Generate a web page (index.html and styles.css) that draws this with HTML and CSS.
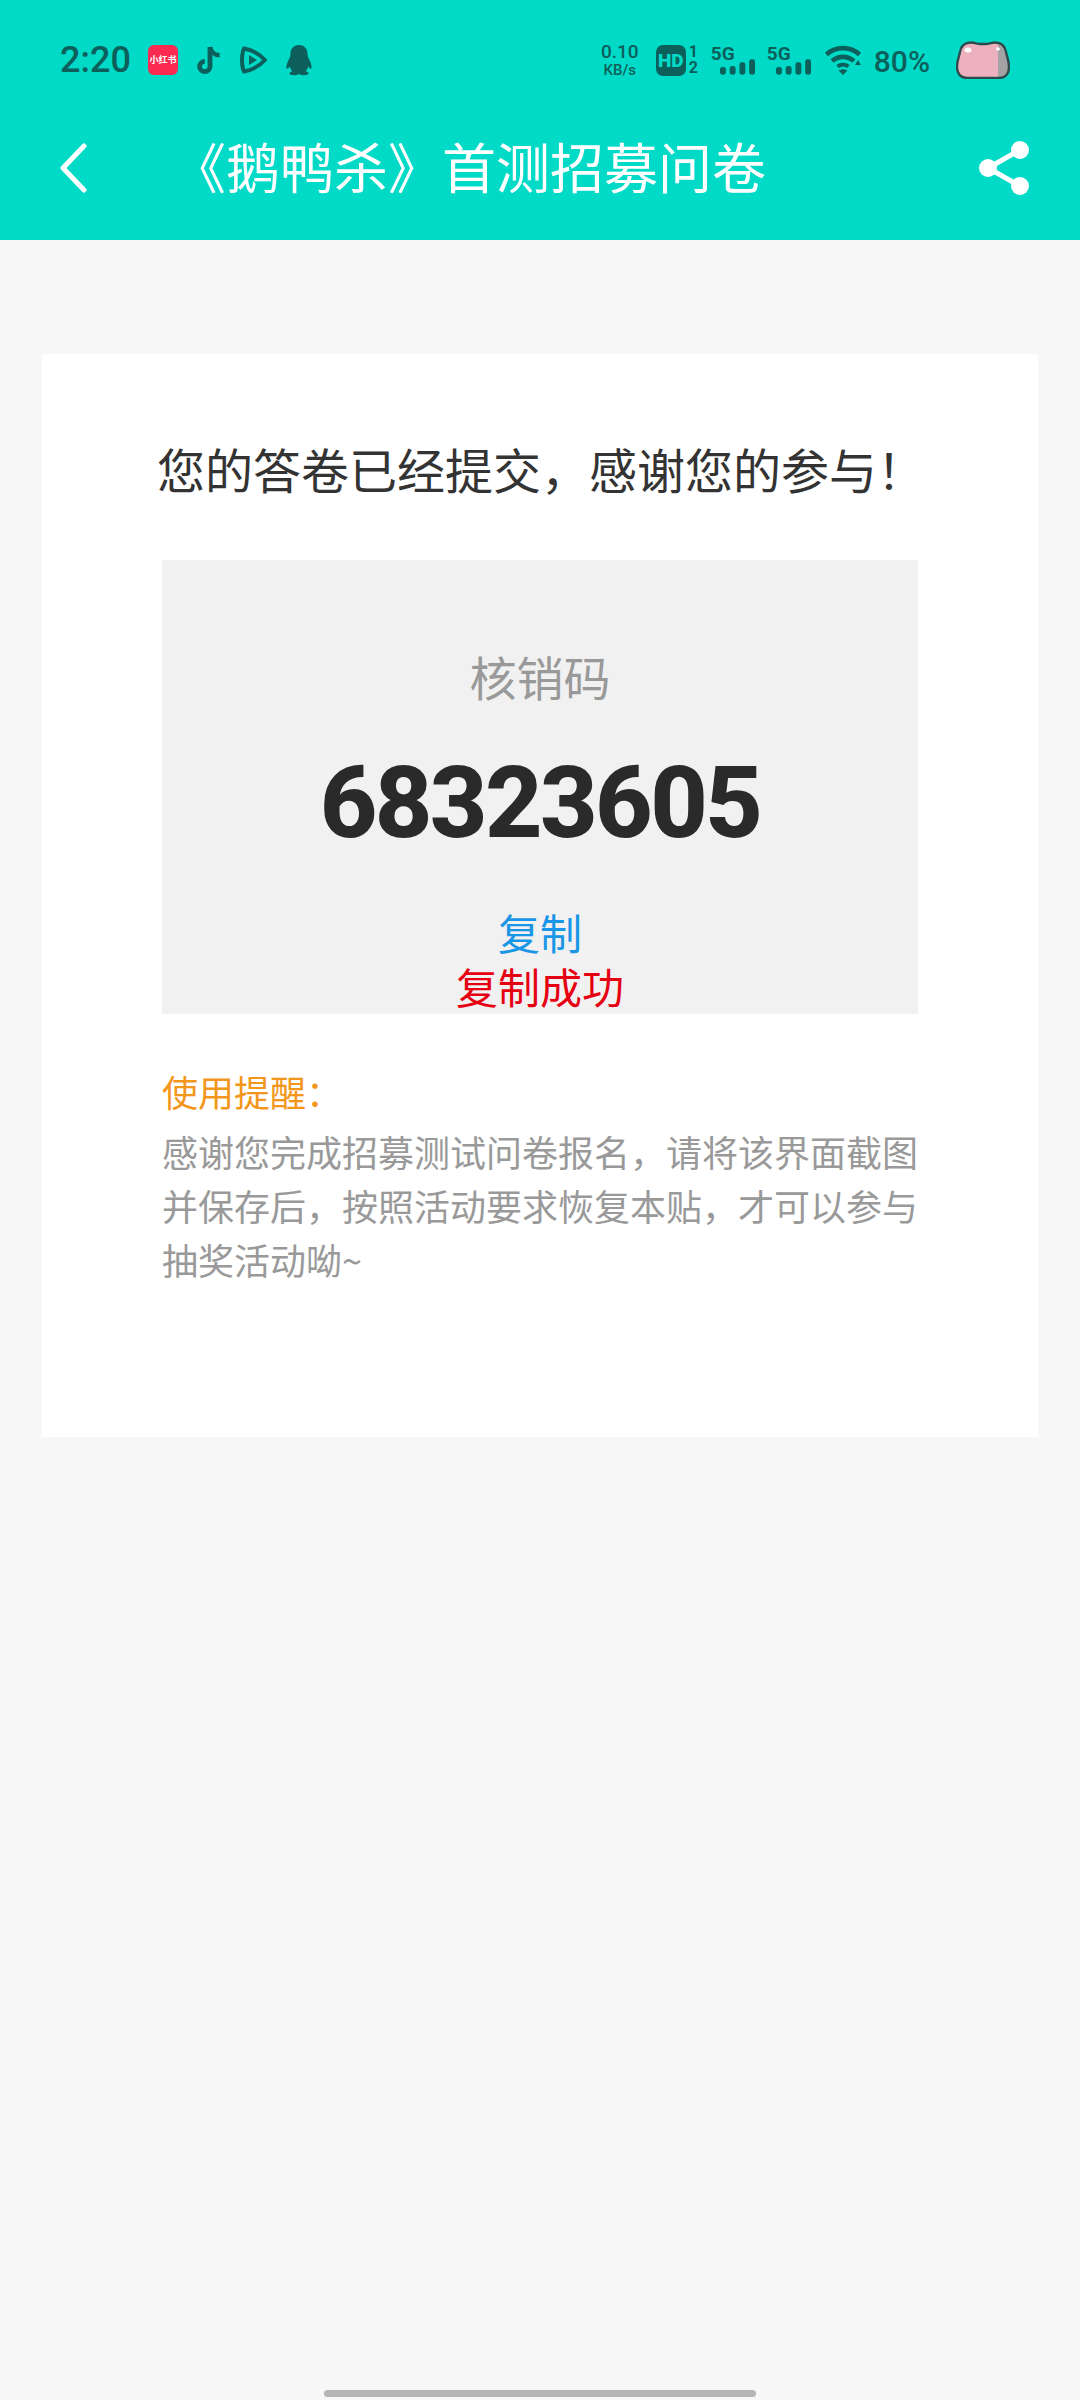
FILE: index.html
```html
<!DOCTYPE html>
<html lang="zh-CN">
<head>
<meta charset="utf-8">
<title>《鹅鸭杀》首测招募问卷</title>
<link rel="stylesheet" href="styles.css">
</head>
<body>
<header class="top">
  <div class="status">
    <span class="time">2:20</span>
    <span class="xhs">小红书</span>
    <svg class="ic ic-tt" viewBox="0 0 26 30"><path d="M14 2v19.500a5.200 5.200 0 1 1-5.200-5.200" fill="none" stroke="#0c5f5b" stroke-width="4.800"/><path d="M14 2c.6 4.600 4.400 8 9.600 8.200" fill="none" stroke="#0c5f5b" stroke-width="4.600"/></svg>
    <svg class="ic ic-tv" viewBox="0 0 30 30"><path d="M6 3.500C3.400 9 3.400 21 6 26.500 14 25 21.500 21 27 15 21.500 9 14 5 6 3.500Z" fill="none" stroke="#0c5f5b" stroke-width="4" stroke-linejoin="round"/><path d="M11 10l8 5-8 5z" fill="#0c5f5b"/></svg>
    <svg class="ic ic-qq" viewBox="0 0 28 32"><path d="M14 1c-6 0-8.600 4.500-8.600 9.500 0 1.500-.4 2.500-1 3.800C2.500 17.800 1 21.500 1.500 24.500c1 .6 2.500-.8 3.300-2 .4 2 1.400 3.500 2.700 4.600-1.500.6-3 1.400-3 2.500 0 1.600 4.500 1.800 7 1.400 1-.3 1.500-.8 2.500-.8s1.500.5 2.500.8c2.500.4 7 .2 7-1.400 0-1.100-1.500-1.900-3-2.500 1.300-1.100 2.300-2.600 2.700-4.600.8 1.200 2.300 2.600 3.300 2 .5-3-1-6.700-2.900-10.200-.6-1.300-1-2.300-1-3.800C22.600 5.500 20 1 14 1Z" fill="#0c5f5b"/></svg>
    <span class="spring"></span>
    <span class="speed"><b>0.10</b><i>KB/s</i></span>
    <span class="hd"><span class="hd-box">HD</span><span class="hd-n">1<br>2</span></span>
    <span class="sig"><em>5G</em><svg viewBox="0 0 36 16"><rect x="0" y="8" width="6" height="8" rx="2.500"/><rect x="10" y="7" width="6" height="9" rx="2.500"/><rect x="20" y="3" width="6" height="13" rx="2.500"/><rect x="30" y="0" width="6" height="16" rx="2.500"/></svg></span>
    <span class="sig sig2"><em>5G</em><svg viewBox="0 0 36 16"><rect x="0" y="8" width="6" height="8" rx="2.500"/><rect x="10" y="7" width="6" height="9" rx="2.500"/><rect x="20" y="3" width="6" height="13" rx="2.500"/><rect x="30" y="0" width="6" height="16" rx="2.500"/></svg></span>
    <svg class="ic ic-wifi" viewBox="0 0 36 30"><path d="M1.500 9.500C10.500 1 25.500 1 34.500 9.500" fill="none" stroke="#0c5f5b" stroke-width="4.600"/><path d="M7 16c6.500-5.500 15.500-5.500 22 0" fill="none" stroke="#0c5f5b" stroke-width="4.600"/><path d="M12.500 21.500c3.200-2.400 7.800-2.400 11 0" fill="none" stroke="#0c5f5b" stroke-width="4"/><path d="M13.500 25.500l4.500-1.500 4.500 1.500-4.500 4.500z" fill="#0c5f5b"/><path d="M30 20h6l-3-5z" fill="#0c5f5b"/></svg>
    <span class="pct">80%</span>
    <svg class="ic ic-bat" viewBox="0 0 54 38">
      <defs><clipPath id="frog"><path d="M4 11C5 5 9 1.500 15 1.500c4 0 6 1.500 9.500 1.500h5c3.500 0 5.500-1.500 9.500-1.500 6 0 10 3.500 11 9.500 1 5 3 9 3 15 0 7-4 11-10 11H11C5 37 1 33 1 26c0-6 2-10 3-15Z"/></clipPath></defs>
      <path d="M4 11C5 5 9 1.500 15 1.500c4 0 6 1.500 9.500 1.500h5c3.500 0 5.500-1.500 9.500-1.500 6 0 10 3.500 11 9.500 1 5 3 9 3 15 0 7-4 11-10 11H11C5 37 1 33 1 26c0-6 2-10 3-15Z" fill="#edb0bf"/>
      <rect class="frog-grey" x="42" y="0" width="12" height="38" fill="#a3a3a3"/>
      <path d="M4 11C5 5 9 1.500 15 1.500c4 0 6 1.500 9.500 1.500h5c3.500 0 5.500-1.500 9.500-1.500 6 0 10 3.500 11 9.500 1 5 3 9 3 15 0 7-4 11-10 11H11C5 37 1 33 1 26c0-6 2-10 3-15Z" fill="none" stroke="#2f4a4c" stroke-width="2.400"/>
      <ellipse cx="12" cy="9" rx="3.500" ry="2.500" fill="#fff"/><circle cx="42" cy="8" r="1.800" fill="#fff"/>
    </svg>
  </div>
  <div class="bar">
    <svg class="back" viewBox="0 0 30 50"><path d="M26 3 5 25l21 22" fill="none" stroke="#fff" stroke-width="5" stroke-linecap="round" stroke-linejoin="round"/></svg>
    <h1 class="title">《鹅鸭杀》首测招募问卷</h1>
    <svg class="share" viewBox="0 0 52 56"><path d="M42 10 10 28l32 18" fill="none" stroke="#fff" stroke-width="5"/><circle cx="42" cy="10" r="9" fill="#fff"/><circle cx="10" cy="28" r="9" fill="#fff"/><circle cx="42" cy="46" r="9" fill="#fff"/></svg>
  </div>
</header>
<main class="card">
  <p class="done">您的答卷已经提交，感谢您的参与！</p>
  <section class="code">
    <div class="code-label">核销码</div>
    <div class="code-num">68323605</div>
    <div class="copy">复制</div>
    <div class="copied">复制成功</div>
  </section>
  <h2 class="tip-h">使用提醒：</h2>
  <p class="tip">感谢您完成招募测试问卷报名，请将该界面截图并保存后，按照活动要求恢复本贴，才可以参与抽奖活动呦~</p>
</main>
<div class="home"></div>
</body>
</html>
```
FILE: styles.css
```css
* { box-sizing: border-box; }
html, body { margin: 0; padding: 0; }
body {
  width: 1080px;
  height: 2400px;
  background: #f7f7f7;
  font-family: "Noto Sans CJK SC", "Liberation Sans", sans-serif;
  position: relative;
  overflow: hidden;
}
.top { height: 240px; background: #00dac6; }
.status {
  height: 120px;
  display: flex;
  align-items: center;
  padding: 0 70px 0 60px;
  color: #0c5f5b;
  font-family: Roboto, sans-serif;
}
.time { font-size: 36px; font-weight: 500; line-height: 1; width: 88px; }
.xhs {
  width: 30px; height: 30px; border-radius: 6px;
  background: #fb2a50; color: #fff;
  font: 700 9px/30px "Noto Sans CJK SC", sans-serif;
  text-align: center; white-space: nowrap;
}
.ic { display: block; flex: none; }
.ic-tt { width: 26px; height: 30px; margin-left: 18px; }
.ic-tv { width: 30px; height: 30px; margin-left: 16px; }
.ic-qq { width: 28px; height: 32px; margin-left: 17px; }
.frog-grey { clip-path: url(#frog); }
.spring { flex: 1; }
.speed { display: flex; flex-direction: column; align-items: center; width: 42px; line-height: 1; }
.speed b { font-size: 19px; font-weight: 500; }
.speed i { font-size: 15px; font-weight: 500; font-style: normal; margin-top: 2px; }
.hd { display: flex; align-items: center; margin-left: 15px; }
.hd-box {
  width: 30px; height: 31px; border-radius: 7px;
  background: #0c5f5b; color: #00dac6;
  font: 900 19px/31px Roboto, sans-serif; text-align: center;
}
.hd-n { font: 700 16px/16px Roboto, sans-serif; margin-left: 3px; width: 11px; }
.sig { display: block; width: 46px; height: 32px; margin-left: 11px; padding-top: 1px; }
.sig em { display: block; font: 700 19px/18px Roboto, sans-serif; font-style: normal; }
.sig svg { display: block; width: 35px; height: 16px; margin: -4px 0 0 9px; fill: #0c5f5b; }
.sig2 { margin-left: 10px; }
.ic-wifi { width: 36px; height: 30px; margin-left: 12px; }
.pct { font-size: 30px; font-weight: 500; line-height: 1; margin: 3px 0 0 13px; }
.ic-bat { width: 54px; height: 38px; margin-left: 26px; }
.bar {
  height: 120px;
  display: flex;
  align-items: center;
  padding: 0 50px 24px 58px;
}
.back { width: 30px; height: 50px; flex: none; }
.title {
  margin: -4px 0 0 84px;
  font-size: 54px; font-weight: 400; line-height: 64px;
  color: #fff; white-space: nowrap; flex: 1;
}
.share { width: 52px; height: 56px; flex: none; }
.card {
  margin: 114px 42px 0;
  height: 1083px;
  background: #fff;
  padding: 81px 120px 0;
}
.done {
  margin: 0 0 0 -5px;
  font-size: 48px; line-height: 66px; color: #333; white-space: nowrap;
}
.code {
  margin-top: 59px;
  height: 454px;
  background: #f1f1f1;
  text-align: center;
  padding-top: 84px;
}
.code-label { font-size: 47px; line-height: 64px; color: #999; }
.code-num {
  margin-top: 40px;
  font: 800 100px/110px Roboto, sans-serif;
  letter-spacing: -2.6px;
  color: #2a2a2a;
}
.copy, .copied {
  font-family: "Liberation Sans", "Noto Sans CJK SC", sans-serif;
  font-size: 42px;
}
.copy { margin-top: 51px; line-height: 54px; color: #1a96e6; }
.copied { margin-top: 3px; line-height: 48px; color: #e60012; }
.tip-h {
  margin: 50px 0 0;
  font-size: 36px; font-weight: 400; line-height: 54px; color: #f2971b;
}
.tip {
  margin: 6px 0 0;
  font-size: 36px; line-height: 54px; color: #999;
  width: 756px;
}
.home {
  position: absolute; left: 324px; top: 2390px;
  width: 432px; height: 7px; border-radius: 4px; background: #b5b5b5;
}
```
